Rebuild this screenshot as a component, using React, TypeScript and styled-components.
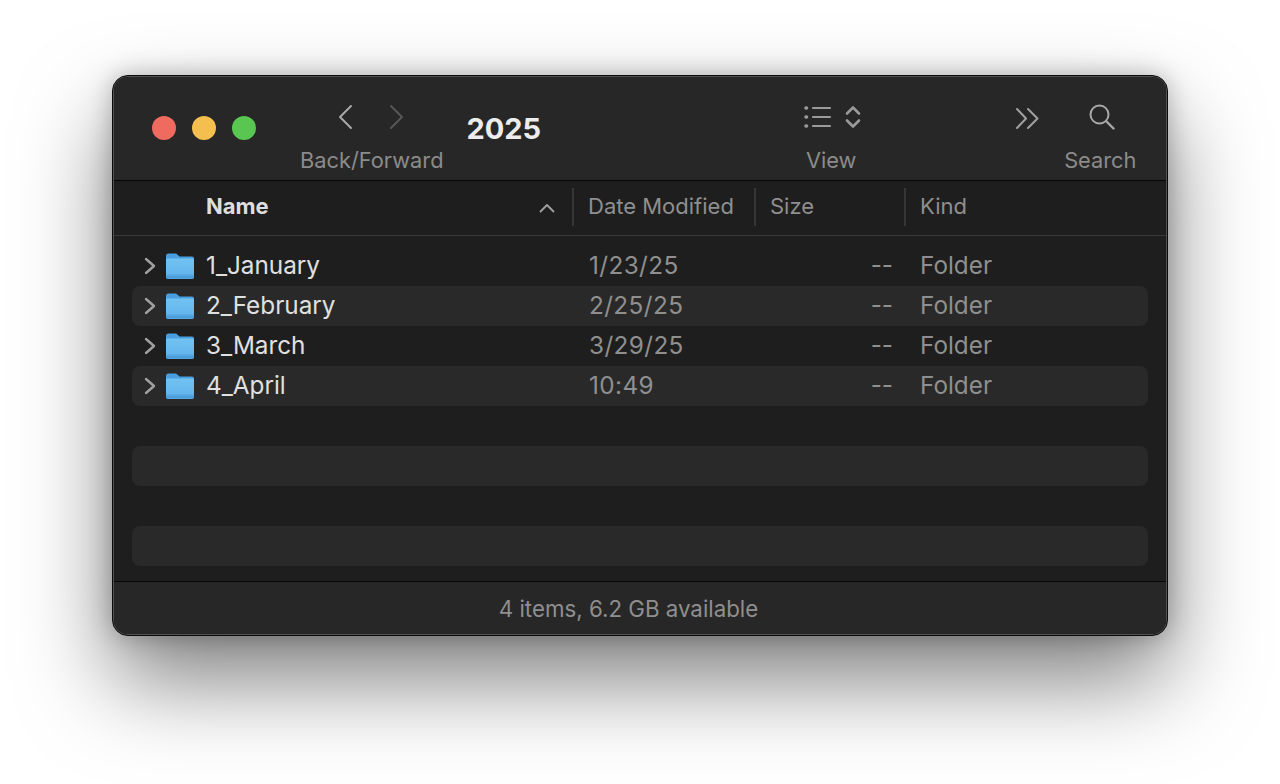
import styled, { createGlobalStyle } from "styled-components";

const files = [
  { name: "1_January", date: "1/23/25" },
  { name: "2_February", date: "2/25/25" },
  { name: "3_March", date: "3/29/25" },
  { name: "4_April", date: "10:49" },
  null,
  null,
  null,
  null,
];

function FolderIcon() {
  return (
    <FolderSvg viewBox="0 0 28 27" width="28" height="27">
      <defs>
        <linearGradient id="folderFront" x1="0" y1="0" x2="0" y2="1">
          <stop offset="0" stopColor="#72c2f2" />
          <stop offset="1" stopColor="#5fb3ec" />
        </linearGradient>
      </defs>
      <path
        d="M0 3C0 1.500 1 .5 2.500 .5h6.700c.9 0 1.500.3 2.100.9L13.500 3.500H26c1.200 0 2 .8 2 2v6H0z"
        fill="#4a9fe0"
      />
      <path
        d="M0 7C0 5.900.7 5.500 1.600 5.500H26.400c.9 0 1.600.4 1.600 1.500V24c0 1.300-.8 2-2 2H2c-1.200 0-2-.7-2-2z"
        fill="url(#folderFront)"
      />
      <path d="M0 21.500h28" stroke="#4f9fd9" strokeWidth="0.8" opacity="0.6" />
      <path d="M0 24h28" stroke="#3f8fcf" strokeWidth="3" opacity="0.6" />
    </FolderSvg>
  );
}

function App() {
  return (
    <>
      <GlobalStyle />
      <Window>
        <Inner>
          <Toolbar>
            <TrafficLights>
              <Light $color="#ef6a5f" />
              <Light $color="#f5bf4f" />
              <Light $color="#58c650" />
            </TrafficLights>
            <NavGroup>
              <NavIcons>
                <svg width="20" height="26" viewBox="0 0 20 26" fill="none">
                  <path d="M15 2 4 13l11 11" stroke="#a8a8a8" strokeWidth="2" strokeLinecap="round" strokeLinejoin="round" />
                </svg>
                <svg width="20" height="26" viewBox="0 0 20 26" fill="none">
                  <path d="M5 2l11 11L5 24" stroke="#565656" strokeWidth="2" strokeLinecap="round" strokeLinejoin="round" />
                </svg>
              </NavIcons>
              <ToolLabel>Back/Forward</ToolLabel>
            </NavGroup>
            <Title>2025</Title>
            <ViewGroup>
              <ViewIcon>
                <svg width="60" height="26" viewBox="0 0 60 26" fill="none" stroke="#9a9a9a" strokeLinecap="round">
                  <path d="M9 4h17M9 13h17M9 22h17" strokeWidth="2.200" />
                  <path d="M2 4h.5M2 13h.5M2 22h.5" strokeWidth="3.600" />
                  <path d="M43 9.500l6-6 6 6M43 16.500l6 6 6-6" strokeWidth="2.600" strokeLinejoin="round" />
                </svg>
              </ViewIcon>
              <ToolLabel>View</ToolLabel>
            </ViewGroup>
            <MoreIcon>
              <svg width="26" height="24" viewBox="0 0 26 24" fill="none" stroke="#a0a0a0" strokeWidth="2" strokeLinecap="round" strokeLinejoin="round">
                <path d="M2 3l9 9.500-9 9.500M13 3l9.500 9.500L13 22" />
              </svg>
            </MoreIcon>
            <SearchGroup>
              <SearchIcon>
                <svg width="26" height="26" viewBox="0 0 26 26" fill="none" stroke="#a8a8a8" strokeLinecap="round">
                  <circle cx="10.500" cy="10.500" r="9" strokeWidth="2" />
                  <path d="M17.500 17.500l7 7" strokeWidth="2.400" />
                </svg>
              </SearchIcon>
              <ToolLabel>Search</ToolLabel>
            </SearchGroup>
          </Toolbar>
          <HeaderRow>
            <NameHeader>
              Name
              <SortArrow width="16" height="10" viewBox="0 0 16 10" fill="none">
                <path d="M1.500 8.500 8 2l6.500 6.500" stroke="#a0a0a0" strokeWidth="1.800" strokeLinecap="round" strokeLinejoin="round" />
              </SortArrow>
            </NameHeader>
            <ColumnHeader>Date Modified</ColumnHeader>
            <ColumnHeader>Size</ColumnHeader>
            <ColumnHeader>Kind</ColumnHeader>
          </HeaderRow>
          <List>
            {files.map((file, i) => (
              <Row key={i} $striped={i % 2 === 1}>
                {file && (
                  <>
                    <NameCell>
                      <svg width="12" height="18" viewBox="0 0 12 18" fill="none">
                        <path d="M2 2l8 7-8 7" stroke="#a0a0a0" strokeWidth="2.400" strokeLinecap="round" strokeLinejoin="round" />
                      </svg>
                      <FolderIcon />
                      <FileName>{file.name}</FileName>
                    </NameCell>
                    <DateCell>{file.date}</DateCell>
                    <SizeCell>--</SizeCell>
                    <KindCell>Folder</KindCell>
                  </>
                )}
              </Row>
            ))}
          </List>
          <StatusBar>4 items, 6.2 GB available</StatusBar>
        </Inner>
      </Window>
    </>
  );
}

const GlobalStyle = createGlobalStyle`
  html, body {
    margin: 0;
    padding: 0;
    background: #fff;
    overflow: hidden;
  }
  body {
    font-family: Inter, "Liberation Sans", sans-serif;
    -webkit-font-smoothing: antialiased;
  }
  #root {
    height: 784px;
    display: flex;
    justify-content: center;
    padding-top: 75px;
    box-sizing: border-box;
    background: #fff;
  }
`;

const Window = styled.div`
  width: 1056px;
  height: 561px;
  box-sizing: border-box;
  padding: 1px;
  background: #505050;
  border: 1px solid #0c0c0c;
  border-radius: 16px;
  box-shadow: 0 44px 90px rgba(0, 0, 0, 0.5), 0 0 24px rgba(0, 0, 0, 0.25);
`;

const Inner = styled.div`
  height: 100%;
  display: flex;
  flex-direction: column;
  background: #1e1e1e;
  border-radius: 14px;
  overflow: hidden;
`;

const Toolbar = styled.div`
  height: 103px;
  flex-shrink: 0;
  display: flex;
  align-items: flex-start;
  background: #272727;
  border-bottom: 1px solid #060606;
`;

const TrafficLights = styled.div`
  display: flex;
  gap: 16px;
  margin: 39px 0 0 38px;
`;

const Light = styled.span<{ $color: string }>`
  width: 24px;
  height: 24px;
  border-radius: 50%;
  background: ${(p) => p.$color};
`;

const ToolGroup = styled.div`
  display: flex;
  flex-direction: column;
  align-items: center;
`;

const NavGroup = styled(ToolGroup)`
  margin: 27px 0 0 44px;
`;

const ViewGroup = styled(ToolGroup)`
  margin: 27px 0 0 257px;
`;

const SearchGroup = styled(ToolGroup)`
  margin: 27px 0 0 23px;
`;

const NavIcons = styled.div`
  display: flex;
  gap: 30px;
  height: 26px;
  margin-left: -1px;
`;

const ToolIcon = styled.div`
  height: 26px;
  display: flex;
`;

const ViewIcon = styled(ToolIcon)`
  margin-left: 6px;
`;

const SearchIcon = styled(ToolIcon)`
  margin-left: 3px;
`;

const MoreIcon = styled.div`
  margin: 29px 0 0 151px;
  display: flex;
`;

const ToolLabel = styled.div`
  margin-top: 16px;
  font-size: 21.800px;
  line-height: 28px;
  color: #8b8b8b;
  white-space: nowrap;
`;

const Title = styled.div`
  margin: 33px 0 0 23px;
  font-size: 29px;
  line-height: 38px;
  font-weight: 700;
  color: #ececec;
`;

const HeaderRow = styled.div`
  height: 54px;
  flex-shrink: 0;
  display: grid;
  grid-template-columns: 458px 182px 150px 1fr;
  background: #1e1e1e;
  border-bottom: 1px solid #3a3a3a;
`;

const ColumnHeader = styled.div`
  margin: 7px 0 9px;
  padding-left: 14px;
  padding-bottom: 2px;
  display: flex;
  align-items: center;
  font-size: 22px;
  color: #8f8f8f;
  border-left: 2px solid #363636;
`;

const NameHeader = styled.div`
  display: flex;
  align-items: center;
  justify-content: space-between;
  padding: 0 17px 4px 92px;
  font-size: 22px;
  font-weight: 700;
  color: #dedede;
`;

const SortArrow = styled.svg`
  margin-top: 4px;
`;

const List = styled.div`
  flex: 1;
  padding: 10px 18px 0;
  background: #1e1e1e;
`;

const Row = styled.div<{ $striped: boolean }>`
  height: 40px;
  display: grid;
  grid-template-columns: 440px 183px 138px 1fr;
  align-items: center;
  border-radius: 8px;
  background: ${(p) => (p.$striped ? "#292929" : "transparent")};
`;

const NameCell = styled.div`
  display: flex;
  align-items: center;
  padding-left: 12px;
`;

const FolderSvg = styled.svg`
  margin-left: 10px;
`;

const FileName = styled.span`
  margin-left: 12px;
  padding-bottom: 2px;
  font-size: 24.300px;
  color: #e0e0e0;
`;

const Meta = styled.span`
  padding-bottom: 2px;
  font-size: 24.300px;
  color: #8f8f8f;
`;

const DateCell = styled(Meta)`
  padding-left: 17px;
  letter-spacing: 0.4px;
`;

const SizeCell = styled(Meta)`
  text-align: right;
`;

const KindCell = styled(Meta)`
  padding-left: 27px;
`;

const StatusBar = styled.div`
  height: 52px;
  flex-shrink: 0;
  display: flex;
  align-items: center;
  justify-content: center;
  padding-right: 23px;
  background: #272727;
  border-top: 1px solid #060606;
  font-size: 22.300px;
  color: #8f8f8f;
`;

export default App;
